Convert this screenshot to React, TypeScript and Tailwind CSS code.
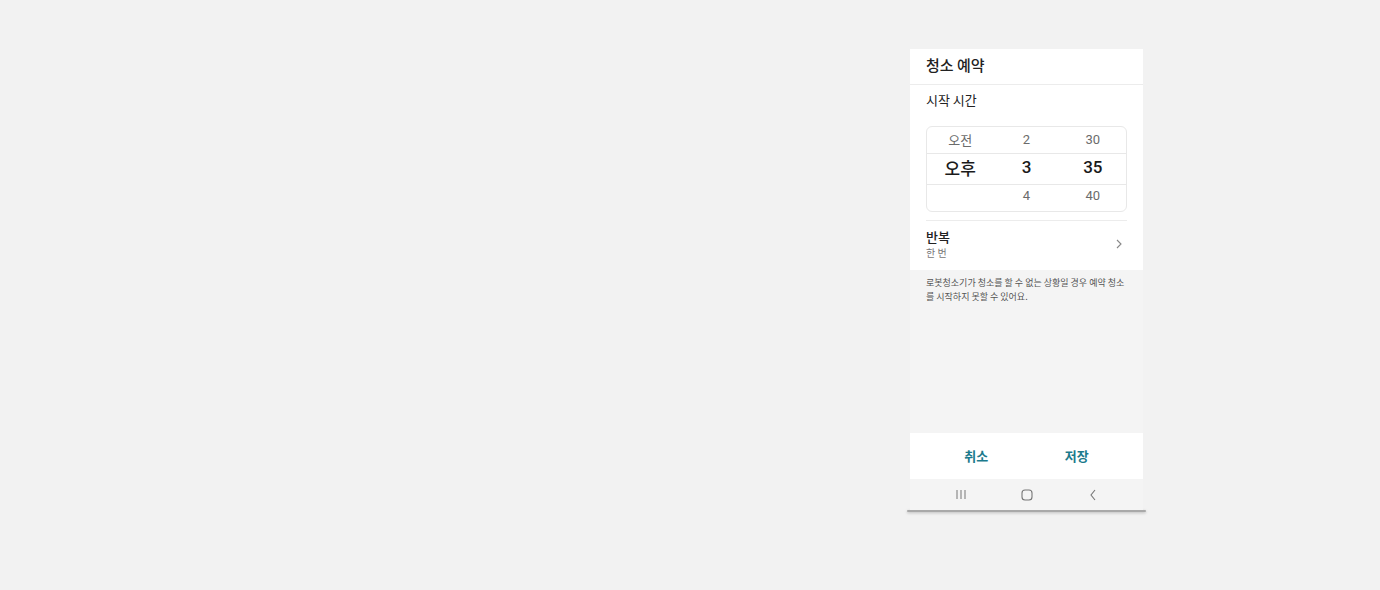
import React from "react"

const font = { fontFamily: '"Noto Sans CJK KR", "Noto Sans", sans-serif' }
const numFont = { fontFamily: 'Roboto, "Noto Sans CJK KR", sans-serif' }

function Picker() {
  const rows = [
    { cells: ["오전", "2", "30"], cls: "h-[26px] pb-[2px]", main: false },
    { cells: ["오후", "3", "35"], cls: "h-[32px] pb-[3px] border-y border-[#e8e8e8]", main: true },
    { cells: ["", "4", "40"], cls: "h-[26px] pb-[6px]", main: false },
  ]
  return (
    <div className="border border-[#e8e8e8] rounded-[6px] overflow-hidden">
      {rows.map((r, i) => (
        <div key={i} className={`grid grid-cols-3 items-center ${r.cls}`}>
          {r.cells.map((c, j) => (
            <div
              key={j}
              style={j === 0 ? font : numFont}
              className={`text-center leading-none ${
                r.main ? "text-[17px] text-[#1a1a1a] font-medium" : "text-[13px] text-[#6b6b6b]"
              }`}
            >
              {c}
            </div>
          ))}
        </div>
      ))}
    </div>
  )
}

export default function App() {
  return (
    <div className="w-full h-[590px] bg-[#f2f2f2] pt-[49px] pl-[907px]" style={font}>
      <div className="w-[239px]">
        <div className="mx-[3px] w-[233px] flex flex-col">
          {/* Header */}
          <div className="h-[36px] bg-white border-b border-[#ececec] px-4 pb-[3px] flex items-center">
            <span className="text-[15px] font-medium text-[#222]">청소 예약</span>
          </div>

          {/* Content */}
          <div className="bg-white px-4 pb-[10px]">
            <div className="h-[29px] pt-[1px] flex items-center text-[13px] text-[#222]">시작 시간</div>
            <div className="pt-[12px]">
              <Picker />
            </div>
            <div className="mt-[8px] border-t border-[#ececec] pt-[7px] flex items-center justify-between">
              <div className="flex flex-col">
                <span className="text-[13px] text-[#222] leading-[18px] font-medium">반복</span>
                <span className="text-[10px] text-[#777] leading-[14px]">한 번</span>
              </div>
              <svg width="8" height="10" viewBox="0 0 8 10" className="mr-[4px]">
                <path d="M2 1 L6 5 L2 9" fill="none" stroke="#888" strokeWidth="1.1" />
              </svg>
            </div>
          </div>

          {/* Note */}
          <div className="h-[163px] bg-[#f4f4f4] px-4 pt-[6px]">
            <p className="text-[9px] leading-[14px] text-[#555] whitespace-nowrap">
              로봇청소기가 청소를 할 수 없는 상황일 경우 예약 청소
              <br />를 시작하지 못할 수 있어요.
            </p>
          </div>

          {/* Footer */}
          <div className="h-[46px] bg-white px-4 pb-[1px] flex items-center">
            <button className="flex-1 text-[13px] font-bold text-[#1b7a8c]">취소</button>
            <button className="flex-1 text-[13px] font-bold text-[#1b7a8c]">저장</button>
          </div>

          {/* Nav bar */}
          <div className="h-[31px] bg-[#f4f4f4] flex items-center justify-center gap-[46px]">
            <div className="w-[20px] flex justify-center">
              <svg width="12" height="11" viewBox="0 0 12 11">
                <path d="M2 1 V10 M6 1 V10 M10 1 V10" stroke="#777" strokeWidth="1" />
              </svg>
            </div>
            <div className="w-[20px] flex justify-center">
              <svg width="12" height="12" viewBox="0 0 12 12">
                <rect x="1" y="1" width="10" height="10" rx="3" fill="none" stroke="#777" strokeWidth="1.1" />
              </svg>
            </div>
            <div className="w-[20px] flex justify-center">
              <svg width="8" height="12" viewBox="0 0 8 12">
                <path d="M6 1 L2 6 L6 11" fill="none" stroke="#777" strokeWidth="1.1" />
              </svg>
            </div>
          </div>
        </div>
        <div className="h-[2px] w-[239px] bg-[#a9a9a9] rounded-full shadow-[0_1px_3px_rgba(0,0,0,0.25)]" />
      </div>
    </div>
  )
}
